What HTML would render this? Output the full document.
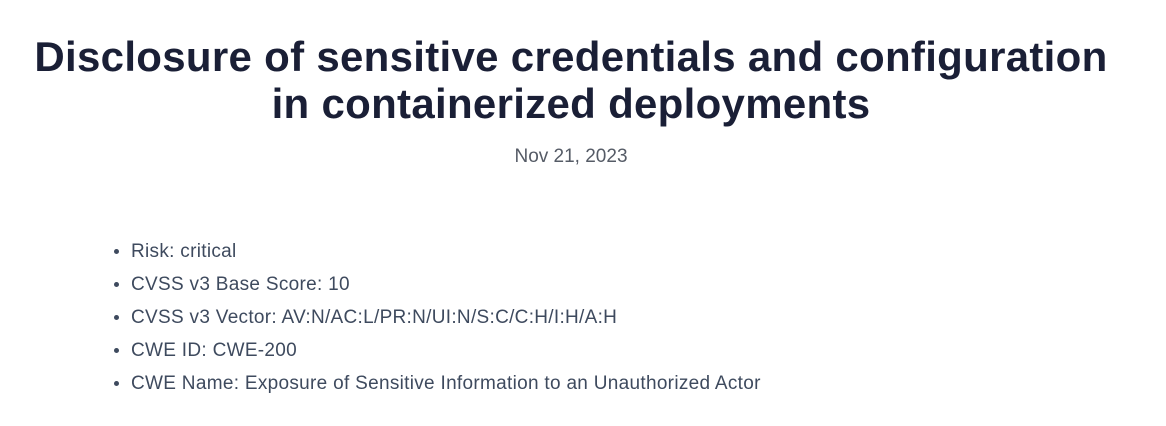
<!DOCTYPE html>
<html><head><meta charset="utf-8"><style>
html,body{margin:0;padding:0;background:#fff;width:1166px;height:426px;overflow:hidden}
body{font-family:"Liberation Sans",sans-serif}
h1{position:absolute;left:0;top:33px;width:1142px;margin:0;text-align:center;font-size:42px;line-height:47px;font-weight:bold;color:#1a1f36;letter-spacing:0.3px}
.date{position:absolute;left:0;width:1142px;top:146px;text-align:center;font-size:19px;color:#555b66}
ul{position:absolute;left:113px;top:235px;margin:0;padding:0 0 0 18px;font-size:19px;line-height:33px;color:#3e4a5e;letter-spacing:0.3px}
li::marker{font-size:17px}
</style></head><body>
<h1>Disclosure of sensitive credentials and configuration<br>in containerized deployments</h1>
<div class="date">Nov 21, 2023</div>
<ul>
<li>Risk: critical</li>
<li>CVSS v3 Base Score: 10</li>
<li>CVSS v3 Vector: AV:N/AC:L/PR:N/UI:N/S:C/C:H/I:H/A:H</li>
<li>CWE ID: CWE-200</li>
<li>CWE Name: Exposure of Sensitive Information to an Unauthorized Actor</li>
</ul>
</body></html>
